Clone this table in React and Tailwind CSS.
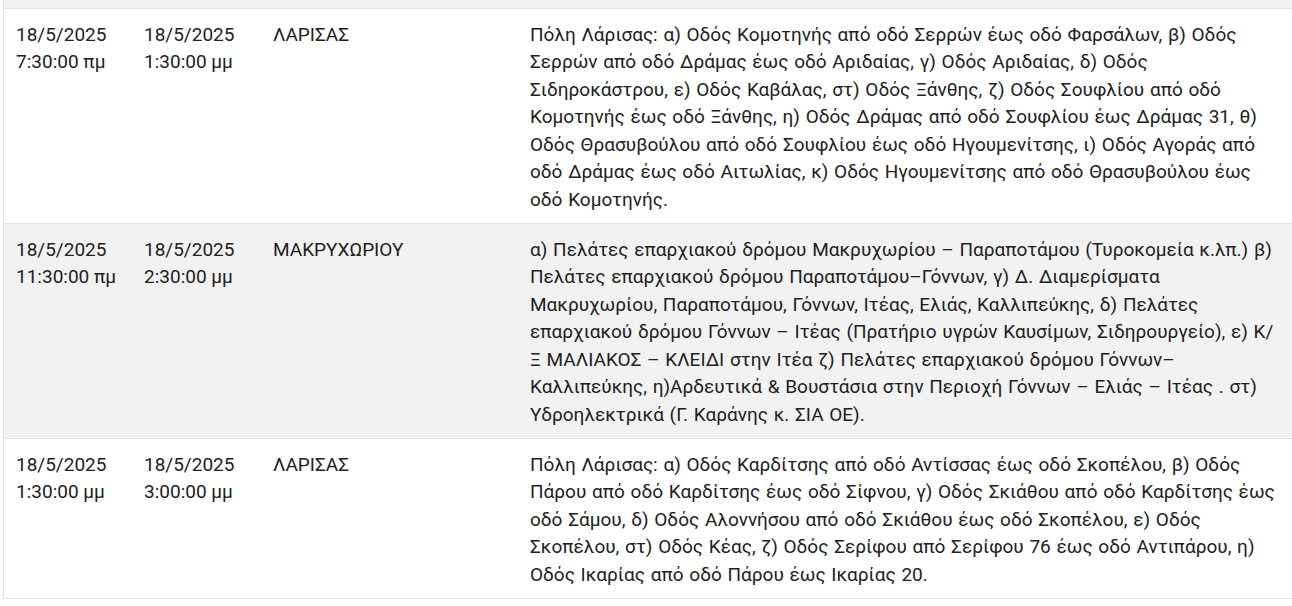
import React from 'react';

const rows = [
  {
    from: ['18/5/2025', '7:30:00 πμ'],
    to: ['18/5/2025', '1:30:00 μμ'],
    area: 'ΛΑΡΙΣΑΣ',
    text: 'Πόλη Λάρισας: α) Οδός Κομοτηνής από οδό Σερρών έως οδό Φαρσάλων, β) Οδός Σερρών από οδό Δράμας έως οδό Αριδαίας, γ) Οδός Αριδαίας, δ) Οδός Σιδηροκάστρου, ε) Οδός Καβάλας, στ) Οδός Ξάνθης, ζ) Οδός Σουφλίου από οδό Κομοτηνής έως οδό Ξάνθης, η) Οδός Δράμας από οδό Σουφλίου έως Δράμας 31, θ) Οδός Θρασυβούλου από οδό Σουφλίου έως οδό Ηγουμενίτσης, ι) Οδός Αγοράς από οδό Δράμας έως οδό Αιτωλίας, κ) Οδός Ηγουμενίτσης από οδό Θρασυβούλου έως οδό Κομοτηνής.',
    grey: false,
  },
  {
    from: ['18/5/2025', '11:30:00 πμ'],
    to: ['18/5/2025', '2:30:00 μμ'],
    area: 'ΜΑΚΡΥΧΩΡΙΟΥ',
    text: 'α) Πελάτες επαρχιακού δρόμου Μακρυχωρίου – Παραποτάμου (Τυροκομεία κ.λπ.) β) Πελάτες επαρχιακού δρόμου Παραποτάμου–Γόννων, γ) Δ. Διαμερίσματα Μακρυχωρίου, Παραποτάμου, Γόννων, Ιτέας, Ελιάς, Καλλιπεύκης, δ) Πελάτες επαρχιακού δρόμου Γόννων – Ιτέας (Πρατήριο υγρών Καυσίμων, Σιδηρουργείο), ε) Κ/Ξ ΜΑΛΙΑΚΟΣ – ΚΛΕΙΔΙ στην Ιτέα ζ) Πελάτες επαρχιακού δρόμου Γόννων–Καλλιπεύκης, η)Αρδευτικά & Βουστάσια στην Περιοχή Γόννων – Ελιάς – Ιτέας . στ) Υδροηλεκτρικά (Γ. Καράνης κ. ΣΙΑ ΟΕ).',
    grey: true,
  },
  {
    from: ['18/5/2025', '1:30:00 μμ'],
    to: ['18/5/2025', '3:00:00 μμ'],
    area: 'ΛΑΡΙΣΑΣ',
    text: 'Πόλη Λάρισας: α) Οδός Καρδίτσης από οδό Αντίσσας έως οδό Σκοπέλου, β) Οδός Πάρου από οδό Καρδίτσης έως οδό Σίφνου, γ) Οδός Σκιάθου από οδό Καρδίτσης έως οδό Σάμου, δ) Οδός Αλοννήσου από οδό Σκιάθου έως οδό Σκοπέλου, ε) Οδός Σκοπέλου, στ) Οδός Κέας, ζ) Οδός Σερίφου από Σερίφου 76 έως οδό Αντιπάρου, η) Οδός Ικαρίας από οδό Πάρου έως Ικαρίας 20.',
    grey: false,
  },
];

function Row({ row }) {
  return (
    <div className={`flex border-b border-[#e0e0e0] ${row.grey ? 'bg-[#f2f2f2]' : 'bg-white'}`}>
      <div className="w-[128px] shrink-0 px-3 pt-[11.5px] pb-[10px]">
        {row.from.map((l) => <div key={l}>{l}</div>)}
      </div>
      <div className="w-[129px] shrink-0 px-3 pt-[11.5px] pb-[10px]">
        {row.to.map((l) => <div key={l}>{l}</div>)}
      </div>
      <div className="w-[257px] shrink-0 px-3 pt-[11.5px] pb-[10px]">{row.area}</div>
      <div className="w-[770px] shrink-0 px-3 pt-[11.5px] pb-[10px] [word-spacing:1px]">{row.text}</div>
    </div>
  );
}

export default function App() {
  return (
    <div className="w-[1292px] h-[606px] overflow-hidden bg-white text-[#212121] text-[19px] leading-[27.5px]" style={{ fontFamily: 'Roboto, "Noto Sans", sans-serif' }}>
      <div className="ml-[3px] border-l border-[#e0e0e0]">
        <div className="h-[9px] bg-[#f2f2f2] border-b border-[#e0e0e0]" />
        {rows.map((r, i) => <Row key={i} row={r} />)}
      </div>
    </div>
  );
}
